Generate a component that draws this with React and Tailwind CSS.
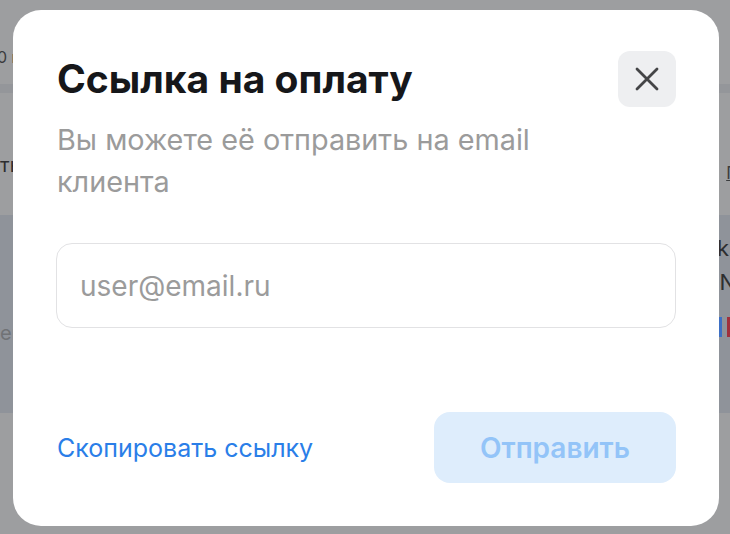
function CloseIcon() {
  return (
    <svg width="24" height="24" viewBox="0 0 24 24" fill="none" stroke="currentColor" strokeWidth="2.8" strokeLinecap="round">
      <path d="M2 2L22 22M22 2L2 22" />
    </svg>
  );
}

function Backdrop() {
  return (
    <div className="flex h-full flex-col text-[16px] leading-none">
      <div className="flex h-[84px] items-start justify-between bg-[#9d9ea0] pt-[49px]">
        <span className="-ml-[3px] text-[#3b3c3e]">0 м</span>
      </div>
      <div className="h-[9px] bg-[#94969a]" />
      <div className="flex h-[122px] items-start justify-between bg-[#9d9ea0] pt-[62px]">
        <span className="text-[20px] text-[#2d2e30]">ть</span>
        <span className="mr-[-6px] mt-[10px] text-[17px] text-[#3b3c3e] underline">Г</span>
      </div>
      <div className="flex h-[198px] justify-between bg-[#8f939a]">
        <div className="pt-[108px] text-[20px] text-[#707276]">ев</div>
        <div className="flex flex-col items-end gap-[12px] pt-[22px] text-[22px] text-[#2d2e30]">
          <span className="mr-[1px]">k</span>
          <span className="-mr-[6px]">N</span>
          <div className="mt-[12px] flex gap-[5px]">
            <span className="h-[20px] w-[3px] bg-[#3d6fc4]" />
            <span className="h-[20px] w-[3px] bg-[#a0303c]" />
          </div>
        </div>
      </div>
      <div className="flex-1 bg-[#9d9ea0]" />
    </div>
  );
}

export default function App() {
  return (
    <div className="relative h-[534px] w-[730px] overflow-hidden bg-[#9d9ea0] font-['Inter','Noto_Sans',sans-serif]">
      <Backdrop />

      <div className="absolute left-[13px] top-[10px] flex h-[516px] w-[706px] flex-col rounded-[28px] bg-white px-[43px] pt-[41px] pb-[43px]">
        <div className="flex items-center justify-between pl-[1px]">
          <h2 className="text-[39px] font-bold leading-[48px] text-[#16171a]">Ссылка на оплату</h2>
          <button
            type="button"
            className="flex h-[56px] w-[58px] shrink-0 items-center justify-center rounded-[12px] bg-[#eeeff1] text-[#444547]"
          >
            <CloseIcon />
          </button>
        </div>

        <p className="mt-[12px] max-w-[540px] pl-[1px] text-[28.8px] leading-[42px] text-[#9b9b9b]">
          Вы можете её отправить на email клиента
        </p>

        <input
          placeholder="user@email.ru"
          className="mt-[40px] h-[85px] w-full shrink-0 rounded-[16px] border border-[#e2e2e4] px-[23px] text-[28px] text-[#17181a] outline-none placeholder:text-[#9b9b9b]"
        />

        <div className="mt-auto flex items-center justify-between pl-[1px]">
          <button type="button" className="text-[25px] leading-[32px] text-[#2a7ee8]">
            Скопировать ссылку
          </button>
          <button
            type="button"
            className="flex h-[71px] w-[242px] items-center justify-center rounded-[16px] bg-[#deedfc] text-[28px] font-semibold text-[#93c4f8]"
          >
            Отправить
          </button>
        </div>
      </div>
    </div>
  );
}
